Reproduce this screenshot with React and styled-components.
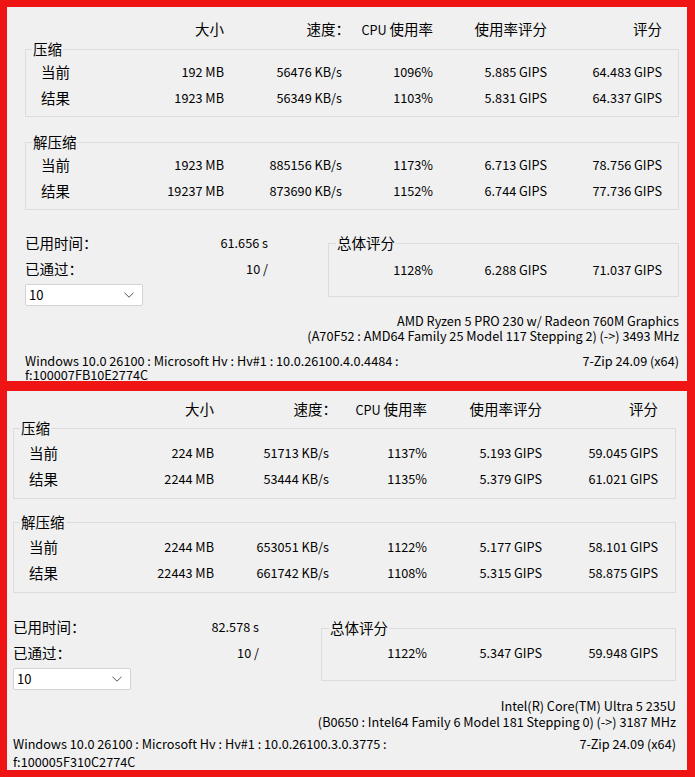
import styled, { createGlobalStyle } from "styled-components";

const GlobalStyle = createGlobalStyle`
  html, body {
    margin: 0;
    padding: 0;
  }
  body {
    background: #f01515;
    font-family: "Noto Sans CJK SC", "Liberation Sans", sans-serif;
    font-size: 12.7px;
    color: #000;
  }
`;

const panels = [
  {
    id: "amd",
    h: 374,
    pt: 12,
    pl: 18,
    pr: 8,
    cols: "60px 1fr 118px 91px 114px 115px",
    totalCols: "1fr 91px 114px 115px",
    boxPl: 15,
    boxPr: 16,
    g1: { mt: 1, pt: 1, pb: 5 },
    g2: { mt: 16, pt: 1, pb: 5 },
    sumMt: 20,
    statsW: 243,
    sumGap: 60,
    total: { mt: 4, pt: 5, pb: 13 },
    cpuMt: 7,
    cpuLh: 15,
    footMt: 11,
    footLh: 14,
    comp: [
      ["当前", "192 MB", "56476 KB/s", "1096%", "5.885 GIPS", "64.483 GIPS"],
      ["结果", "1923 MB", "56349 KB/s", "1103%", "5.831 GIPS", "64.337 GIPS"],
    ],
    decomp: [
      ["当前", "1923 MB", "885156 KB/s", "1173%", "6.713 GIPS", "78.756 GIPS"],
      ["结果", "19237 MB", "873690 KB/s", "1152%", "6.744 GIPS", "77.736 GIPS"],
    ],
    elapsed: "61.656 s",
    passed: "10 /",
    totals: ["1128%", "6.288 GIPS", "71.037 GIPS"],
    cpu: [
      "AMD Ryzen 5 PRO 230 w/ Radeon 760M Graphics",
      "(A70F52 : AMD64 Family 25 Model 117 Stepping 2) (->) 3493 MHz",
    ],
    os: ["Windows 10.0 26100 : Microsoft Hv : Hv#1 : 10.0.26100.4.0.4484 :", "f:100007FB10E2774C"],
  },
  {
    id: "intel",
    h: 379,
    pt: 8,
    pl: 6,
    pr: 11,
    cols: "60px 1fr 115px 98px 115px 116px",
    totalCols: "1fr 98px 115px 116px",
    boxPl: 15,
    boxPr: 17,
    g1: { mt: 0, pt: 3, pb: 6 },
    g2: { mt: 14, pt: 3, pb: 6 },
    sumMt: 21,
    statsW: 246,
    sumGap: 62,
    total: { mt: 5, pt: 3, pb: 14 },
    cpuMt: 8,
    cpuLh: 16,
    footMt: 5,
    footLh: 18,
    comp: [
      ["当前", "224 MB", "51713 KB/s", "1137%", "5.193 GIPS", "59.045 GIPS"],
      ["结果", "2244 MB", "53444 KB/s", "1135%", "5.379 GIPS", "61.021 GIPS"],
    ],
    decomp: [
      ["当前", "2244 MB", "653051 KB/s", "1122%", "5.177 GIPS", "58.101 GIPS"],
      ["结果", "22443 MB", "661742 KB/s", "1108%", "5.315 GIPS", "58.875 GIPS"],
    ],
    elapsed: "82.578 s",
    passed: "10 /",
    totals: ["1122%", "5.347 GIPS", "59.948 GIPS"],
    cpu: [
      "Intel(R) Core(TM) Ultra 5 235U",
      "(B0650 : Intel64 Family 6 Model 181 Stepping 0) (->) 3187 MHz",
    ],
    os: ["Windows 10.0 26100 : Microsoft Hv : Hv#1 : 10.0.26100.3.0.3775 :", "f:100005F310C2774C"],
  },
];

const Chevron = () => (
  <svg width="10" height="6" viewBox="0 0 10 6" fill="none">
    <path d="M0.5 0.8 L5 5.2 L9.5 0.8" stroke="#555" strokeWidth="1" />
  </svg>
);

// the dialog's full-width colon hugs the right edge of the column
const ColumnHeaders = ({ d }) => (
  <HeaderRow $cols={d.cols} $pl={d.boxPl + 1} $pr={d.boxPr + 1}>
    <Cell />
    <Cell $right>
      <Zh>大小</Zh>
    </Cell>
    <Cell $right>
      <Zh>
        速度<Colon>：</Colon>
      </Zh>
    </Cell>
    <Cell $right>
      CPU <Zh>使用率</Zh>
    </Cell>
    <Cell $right>
      <Zh>使用率评分</Zh>
    </Cell>
    <Cell $right>
      <Zh>评分</Zh>
    </Cell>
  </HeaderRow>
);

const ResultRows = ({ rows, d }) =>
  rows.map((row) => (
    <DataRow key={row[0]} $cols={d.cols} $pl={d.boxPl} $pr={d.boxPr}>
      <Cell>
        <Zh>{row[0]}</Zh>
      </Cell>
      {row.slice(1).map((v, i) => (
        <Cell key={i} $right>
          {v}
        </Cell>
      ))}
    </DataRow>
  ));

const BenchPanel = ({ d }) => (
  <Window $h={d.h} $pt={d.pt} $pl={d.pl} $pr={d.pr}>
    <ColumnHeaders d={d} />

    <Group $mt={d.g1.mt} $pt={d.g1.pt} $pb={d.g1.pb}>
      <Legend>压缩</Legend>
      <ResultRows rows={d.comp} d={d} />
    </Group>

    <Group $mt={d.g2.mt} $pt={d.g2.pt} $pb={d.g2.pb}>
      <Legend>解压缩</Legend>
      <ResultRows rows={d.decomp} d={d} />
    </Group>

    <Summary $mt={d.sumMt} $gap={d.sumGap}>
      <Stats $w={d.statsW}>
        <StatRow>
          <Zh>已用时间：</Zh>
          <span>{d.elapsed}</span>
        </StatRow>
        <StatRow>
          <Zh>已通过：</Zh>
          <span>{d.passed}</span>
        </StatRow>
        <Select>
          <span>10</span>
          <Chevron />
        </Select>
      </Stats>
      <TotalGroup $mt={d.total.mt} $pt={d.total.pt} $pb={d.total.pb}>
        <Legend $offset={7}>总体评分</Legend>
        <DataRow $cols={d.totalCols} $pl={0} $pr={d.boxPr}>
          <Cell />
          {d.totals.map((v, i) => (
            <Cell key={i} $right>
              {v}
            </Cell>
          ))}
        </DataRow>
      </TotalGroup>
    </Summary>

    <CpuInfo $mt={d.cpuMt} $lh={d.cpuLh}>
      <div>{d.cpu[0]}</div>
      <div>{d.cpu[1]}</div>
    </CpuInfo>

    <Footer $mt={d.footMt} $lh={d.footLh}>
      <div>
        {d.os[0]}
        <br />
        {d.os[1]}
      </div>
      <div>7-Zip 24.09 (x64)</div>
    </Footer>
  </Window>
);

export default function App() {
  return (
    <>
      <GlobalStyle />
      <Page>
        {panels.map((p) => (
          <BenchPanel key={p.id} d={p} />
        ))}
      </Page>
    </>
  );
}

function Zh({ children }) {
  return <ZhText>{children}</ZhText>;
}

const ZhText = styled.span`
  font-size: 14.5px;
`;

const Colon = styled.span`
  margin-right: -8px;
`;

const Page = styled.div`
  width: 695px;
  box-sizing: border-box;
  display: flex;
  flex-direction: column;
  gap: 10px;
  padding: 7px 8px 7px 7px;
`;

const Window = styled.div`
  height: ${(p) => p.$h}px;
  box-sizing: border-box;
  overflow: hidden;
  background: #f0f0f0;
  display: flex;
  flex-direction: column;
  padding: ${(p) => p.$pt}px ${(p) => p.$pr}px 0 ${(p) => p.$pl}px;
`;

const HeaderRow = styled.div`
  display: grid;
  grid-template-columns: ${(p) => p.$cols};
  height: 20px;
  line-height: 20px;
  padding: 0 ${(p) => p.$pr}px 0 ${(p) => p.$pl}px;
`;

const DataRow = styled.div`
  display: grid;
  grid-template-columns: ${(p) => p.$cols};
  height: 26px;
  line-height: 26px;
  padding: 0 ${(p) => p.$pr}px 0 ${(p) => p.$pl}px;
`;

const Cell = styled.div`
  white-space: nowrap;
  text-align: ${(p) => (p.$right ? "right" : "left")};
`;

const Group = styled.fieldset`
  margin: ${(p) => p.$mt}px 0 0;
  padding: ${(p) => p.$pt}px 0 ${(p) => p.$pb}px;
  border: 1px solid #dcdcdc;
  min-width: 0;
`;

const Legend = styled.legend`
  margin-left: ${(p) => p.$offset ?? 6}px;
  padding: 0 1px;
  height: 18px;
  line-height: 18px;
  font-size: 14.5px;
`;

const Summary = styled.div`
  display: flex;
  align-items: flex-start;
  gap: ${(p) => p.$gap}px;
  margin-top: ${(p) => p.$mt}px;
`;

const Stats = styled.div`
  width: ${(p) => p.$w}px;
  flex-shrink: 0;
  display: flex;
  flex-direction: column;
`;

const StatRow = styled.div`
  display: flex;
  justify-content: space-between;
  height: 26px;
  line-height: 26px;
`;

const Select = styled.div`
  margin-top: 2px;
  width: 118px;
  height: 22px;
  box-sizing: border-box;
  background: #fff;
  border: 1px solid #d3d3d3;
  border-radius: 2px;
  display: flex;
  align-items: center;
  justify-content: space-between;
  padding: 0 8px 0 3px;
  line-height: 20px;
  font-size: 13px;
`;

const TotalGroup = styled(Group)`
  flex: 1;
`;

const CpuInfo = styled.div`
  margin-top: ${(p) => p.$mt}px;
  text-align: right;
  line-height: ${(p) => p.$lh}px;
  white-space: nowrap;
`;

const Footer = styled.div`
  margin-top: ${(p) => p.$mt}px;
  display: flex;
  justify-content: space-between;
  align-items: flex-start;
  line-height: ${(p) => p.$lh}px;
  white-space: nowrap;
`;
